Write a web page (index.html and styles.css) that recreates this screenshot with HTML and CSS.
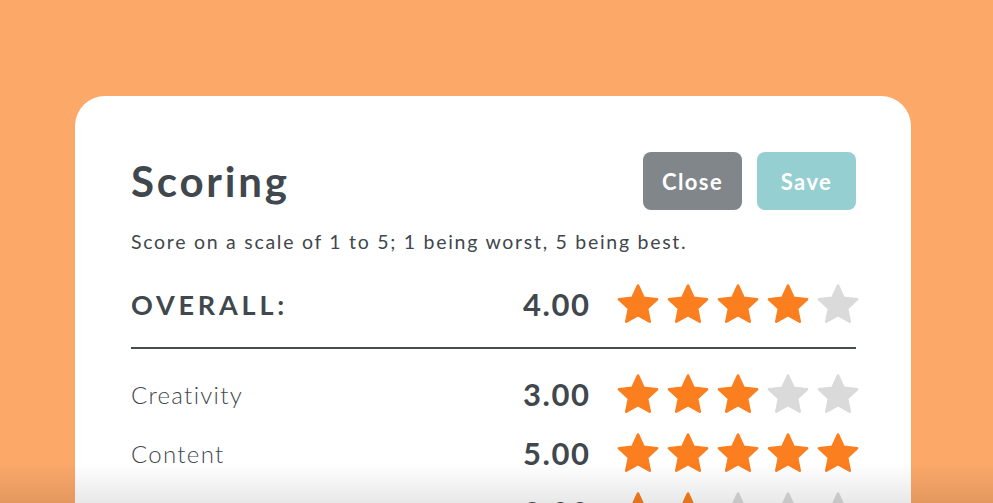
FILE: index.html
```html
<!DOCTYPE html>
<html lang="en">
<head>
<meta charset="utf-8">
<title>Scoring</title>
<link rel="stylesheet" href="styles.css">
</head>
<body>
<svg class="defs" width="0" height="0" aria-hidden="true">
  <symbol id="star" viewBox="0 0 42 40">
    <path d="M21 1.5L26.58 13.81L40.02 15.32L30.04 24.44L32.76 37.68L21 31L9.24 37.68L11.96 24.44L1.98 15.32L15.42 13.81Z" fill="currentColor" stroke="currentColor" stroke-width="2.6" stroke-linejoin="round"/>
  </symbol>
</svg>
<main class="card">
  <header class="head">
    <h1 class="title">Scoring</h1>
    <div class="actions">
      <button class="btn btn-close">Close</button>
      <button class="btn btn-save">Save</button>
    </div>
  </header>
  <p class="hint">Score on a scale of 1 to 5; 1 being worst, 5 being best.</p>

  <div class="row overall">
    <span class="label">OVERALL:</span>
    <div class="score">
      <span class="num">4.00</span>
      <div class="stars">
        <svg class="star on"><use href="#star"/></svg>
        <svg class="star on"><use href="#star"/></svg>
        <svg class="star on"><use href="#star"/></svg>
        <svg class="star on"><use href="#star"/></svg>
        <svg class="star"><use href="#star"/></svg>
      </div>
    </div>
  </div>
  <hr class="rule">

  <div class="list">
    <div class="row">
      <span class="label">Creativity</span>
      <div class="score">
        <span class="num">3.00</span>
        <div class="stars">
          <svg class="star on"><use href="#star"/></svg>
          <svg class="star on"><use href="#star"/></svg>
          <svg class="star on"><use href="#star"/></svg>
          <svg class="star"><use href="#star"/></svg>
          <svg class="star"><use href="#star"/></svg>
        </div>
      </div>
    </div>
    <div class="row">
      <span class="label">Content</span>
      <div class="score">
        <span class="num">5.00</span>
        <div class="stars">
          <svg class="star on"><use href="#star"/></svg>
          <svg class="star on"><use href="#star"/></svg>
          <svg class="star on"><use href="#star"/></svg>
          <svg class="star on"><use href="#star"/></svg>
          <svg class="star on"><use href="#star"/></svg>
        </div>
      </div>
    </div>
    <div class="row">
      <span class="label">Clarity</span>
      <div class="score">
        <span class="num">2.00</span>
        <div class="stars">
          <svg class="star on"><use href="#star"/></svg>
          <svg class="star on"><use href="#star"/></svg>
          <svg class="star"><use href="#star"/></svg>
          <svg class="star"><use href="#star"/></svg>
          <svg class="star"><use href="#star"/></svg>
        </div>
      </div>
    </div>
  </div>
</main>
<div class="fade" aria-hidden="true"></div>
</body>
</html>
```

FILE: styles.css
```css
html, body {
  margin: 0;
  height: 100%;
  overflow: hidden;
}
body {
  background: #fba869;
  font-family: Lato, "Noto Sans", sans-serif;
  color: #40474d;
}
.defs {
  position: absolute;
  width: 0;
  height: 0;
}
.card {
  box-sizing: border-box;
  width: 836px;
  margin: 96px 0 0 75px;
  padding: 56px 55px 60px 56px;
  background: #fff;
  border-radius: 30px;
}
.head {
  display: flex;
  justify-content: space-between;
  align-items: center;
  height: 58px;
}
.title {
  margin: 0;
  font-size: 42px;
  font-weight: 700;
  letter-spacing: 2.8px;
  line-height: 1;
}
.actions {
  display: flex;
  gap: 15px;
}
.btn {
  width: 99px;
  height: 58px;
  border: 0;
  border-radius: 8px;
  color: #fff;
  font-family: Lato, "Noto Sans", sans-serif;
  font-size: 22px;
  font-weight: 700;
  letter-spacing: 1.4px;
  padding: 0;
}
.btn-close { background: #80868a; }
.btn-save { background: #96cfd1; }
.hint {
  margin: 20px 0 0;
  font-size: 19.5px;
  line-height: 24px;
  letter-spacing: 1.72px;
}
.row {
  display: flex;
  justify-content: space-between;
  align-items: center;
  height: 40px;
}
.overall {
  margin-top: 30px;
}
.overall .label {
  font-size: 27px;
  font-weight: 700;
  letter-spacing: 3.8px;
}
.label {
  font-size: 24px;
  font-weight: 300;
  letter-spacing: 1.3px;
}
.score {
  display: flex;
  align-items: center;
  margin-right: -3px;
}
.num {
  width: 94px;
  font-size: 31px;
  font-weight: 700;
  letter-spacing: 1.6px;
}
.stars {
  display: flex;
  gap: 8px;
}
.star {
  width: 42px;
  height: 40px;
  color: #dadada;
  overflow: visible;
}
.star.on { color: #fb7e1f; }
.rule {
  margin: 23px 0 0;
  border: 0;
  height: 2px;
  background: #454c52;
}
.list {
  display: flex;
  flex-direction: column;
  gap: 19px;
  margin-top: 25px;
}
.fade {
  position: fixed;
  left: 0;
  right: 0;
  bottom: 0;
  height: 40px;
  background: linear-gradient(rgba(0,0,0,0), rgba(0,0,0,0.09));
  pointer-events: none;
}
```
